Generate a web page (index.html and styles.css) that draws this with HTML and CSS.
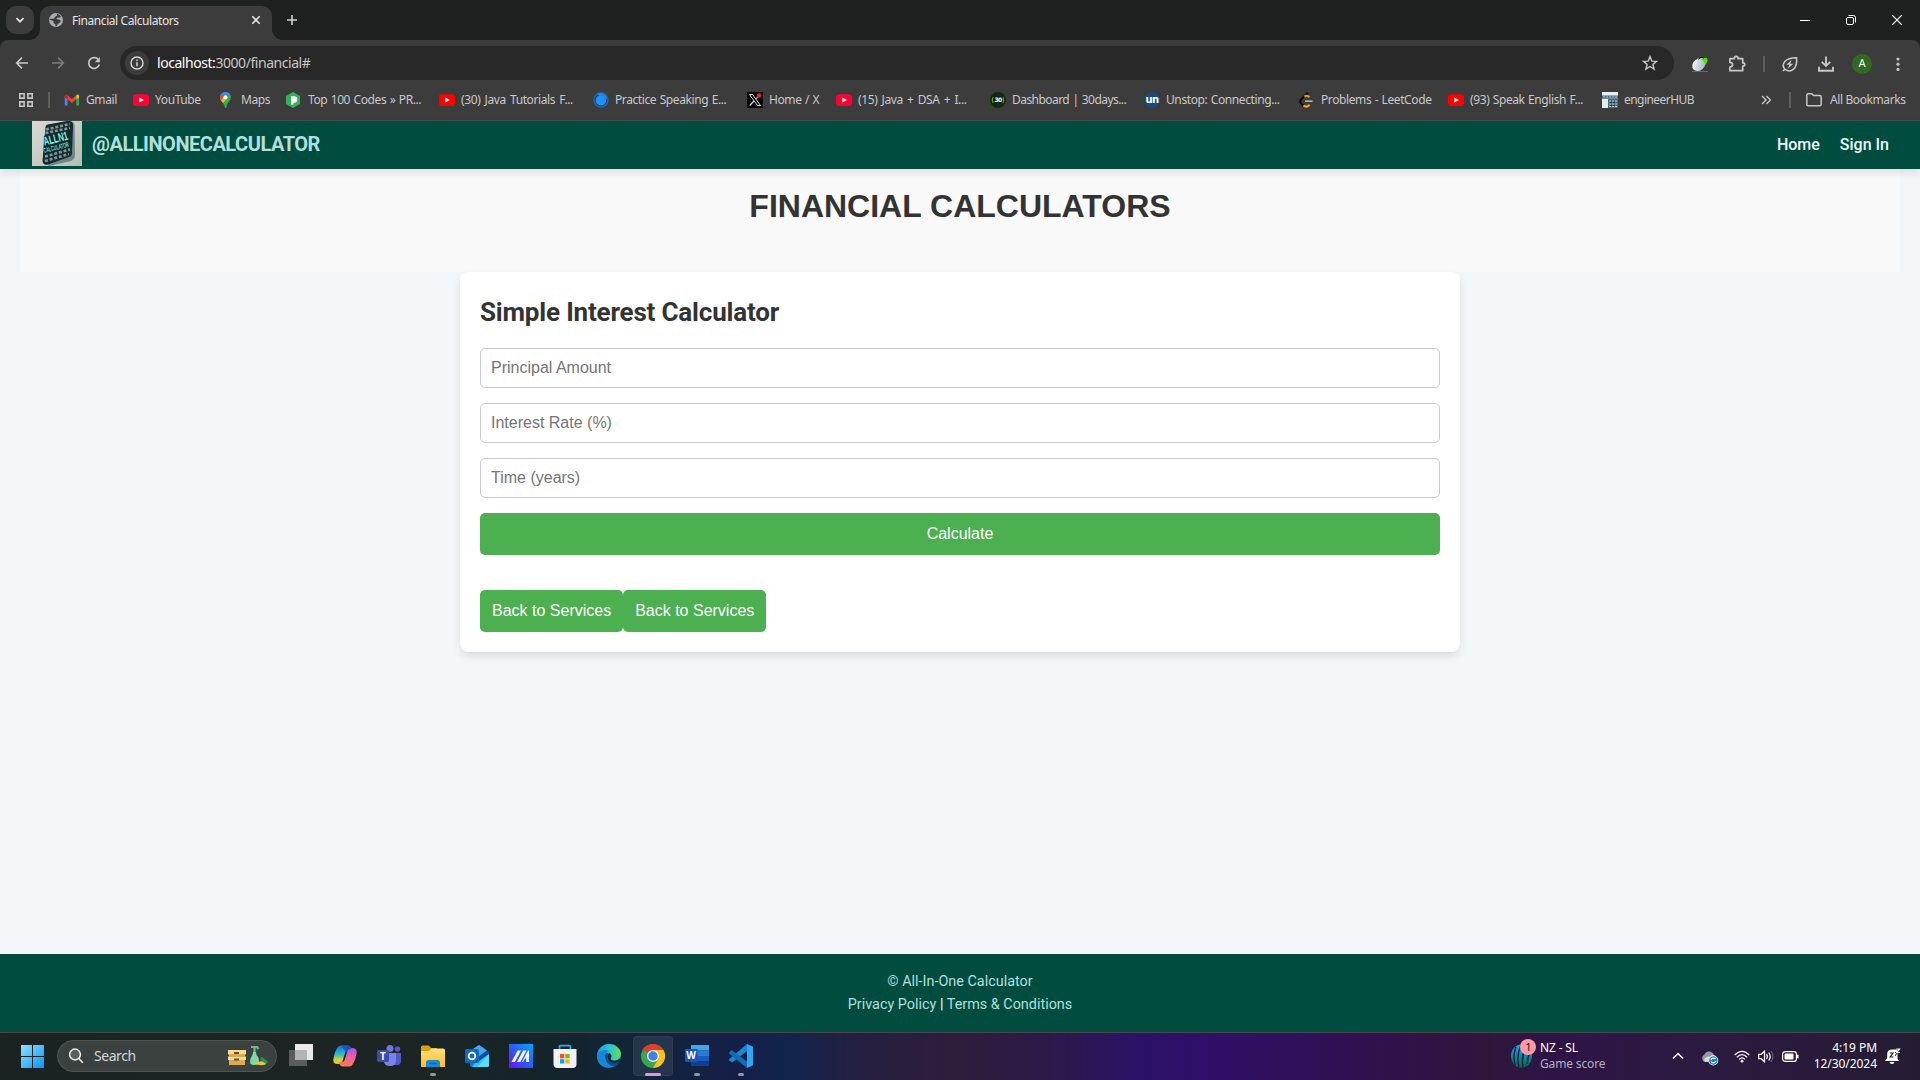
FILE: index.html
```html
<!DOCTYPE html>
<html lang="en">
<head>
<meta charset="utf-8">
<title>Financial Calculators</title>
<link rel="stylesheet" href="styles.css">
</head>
<body>
<svg class="defs" width="0" height="0">
  <defs>
    <symbol id="yt" viewBox="0 0 16 16"><rect y="2.3" width="16" height="11.6" rx="3" fill="currentColor"/><path d="M6.3 5.6l4.6 2.5-4.6 2.5z" fill="#fff"/></symbol>
    <linearGradient id="gWin" x1="0" y1="0" x2="1" y2="1"><stop offset="0" stop-color="#8be3ff"/><stop offset="1" stop-color="#0a93f5"/></linearGradient>
    <linearGradient id="gM" x1="0" y1="1" x2="1" y2="0"><stop offset="0" stop-color="#6a10f5"/><stop offset=".45" stop-color="#2f55f7"/><stop offset="1" stop-color="#00a8ff"/></linearGradient>
    <linearGradient id="gEdge" x1="0" y1="0" x2="1" y2="0"><stop offset="0" stop-color="#1f9de0"/><stop offset=".55" stop-color="#2fc3d0"/><stop offset="1" stop-color="#62e04f"/></linearGradient>
    <linearGradient id="gCopA" x1="0" y1="0" x2="0" y2="1"><stop offset="0" stop-color="#1475d8"/><stop offset=".45" stop-color="#28b5d8"/><stop offset=".75" stop-color="#c5d43a"/><stop offset="1" stop-color="#ffc21a"/></linearGradient>
    <linearGradient id="gCopB" x1="0" y1="0" x2="0" y2="1"><stop offset="0" stop-color="#a553e8"/><stop offset=".5" stop-color="#ee5fa5"/><stop offset="1" stop-color="#ff7a4a"/></linearGradient>
    <linearGradient id="gFold" x1="0" y1="0" x2="0" y2="1"><stop offset="0" stop-color="#ffe07a"/><stop offset="1" stop-color="#fbbd2b"/></linearGradient>
    <linearGradient id="gCric" x1="0" y1="0" x2="0" y2="1"><stop offset="0" stop-color="#18a9ea"/><stop offset=".55" stop-color="#0b8796"/><stop offset="1" stop-color="#086b3f"/></linearGradient>
    <linearGradient id="gLogo" x1="0" y1="0" x2="1" y2="1"><stop offset="0" stop-color="#d9dad3"/><stop offset="1" stop-color="#b4beb4"/></linearGradient>
    <linearGradient id="gMouse" x1="0" y1="0" x2="1" y2="1"><stop offset="0" stop-color="#fff"/><stop offset="1" stop-color="#9aabb5"/></linearGradient>
  </defs>
</svg>

<header class="chrome">
  <div class="tabstrip">
    <div class="tab-search"><svg width="10" height="10" viewBox="0 0 10 10"><path d="M1.5 3.2L5 6.7l3.500-3.500" fill="none" stroke="#e3e3e3" stroke-width="1.8"/></svg></div>
    <div class="tab">
      <svg width="16" height="16" viewBox="0 0 16 16"><circle cx="8" cy="8" r="7" fill="#a6acb4"/><path d="M8.400 1.600C10 3 9 4.200 7.600 4.600 6.200 5 7 6.400 5.600 6.800 4.600 7 3 6.500 1.500 7.500c.8.900 2.300.6 3.400 1.200 1.300.7.200 1.700 1 2.500.8.700 1.700.7 1.700 2.100v1.200c1.500-.4 1.600-2 2.500-2.700 1.200-1 2.500-1.200 2.500-2.700-.3-1.600-2-1.300-3-1.500-1.300-.2-1.200-1.700 0-2 1.200-.4 2.300.2 3.500-.6C12.300 3.300 10.500 2 8.400 1.600z" fill="#3c3c3c"/></svg>
      <span class="tab-title">Financial Calculators</span>
      <svg class="tab-close" width="10" height="10" viewBox="0 0 10 10"><path d="M1.300 1.300l7.400 7.400M8.700 1.300L1.300 8.700" stroke="#e3e3e3" stroke-width="1.600"/></svg>
    </div>
    <svg class="new-tab" width="12" height="12" viewBox="0 0 12 12"><path d="M6 1v10M1 6h10" stroke="#d0d0d0" stroke-width="1.600"/></svg>
    <div class="win-buttons">
      <svg viewBox="0 0 46 40"><path d="M18 20.500h10" stroke="#fff"/></svg>
      <svg viewBox="0 0 46 40"><g fill="none" stroke="#fff"><rect x="18.500" y="17.500" width="7" height="7" rx="1.500"/><path d="M20.500 15.500h5q2 0 2 2v5"/></g></svg>
      <svg viewBox="0 0 46 40"><path d="M18.200 15.200l9.600 9.600M27.800 15.200l-9.600 9.600" stroke="#fff" stroke-width="1.100"/></svg>
    </div>
  </div>

  <div class="toolbar">
    <svg class="tool" viewBox="0 0 36 34"><path d="M24 17H13.500M18 11.700L12.700 17l5.300 5.300" fill="none" stroke="#c7c7c7" stroke-width="1.700"/></svg>
    <svg class="tool" viewBox="0 0 36 34"><path d="M12 17h10.500M18 11.700l5.300 5.300-5.300 5.300" fill="none" stroke="#7d7d7d" stroke-width="1.700"/></svg>
    <svg class="tool" viewBox="0 0 36 34"><path d="M22.600 14A5.400 5.400 0 1 0 23.300 18.500" fill="none" stroke="#c7c7c7" stroke-width="1.700"/><path d="M23.900 11v5.200h-5.200z" fill="#c7c7c7"/></svg>
    <div class="omnibox">
      <div class="site-info"><svg width="14" height="14" viewBox="0 0 14 14"><circle cx="7" cy="7" r="6" fill="none" stroke="#d8d8d8" stroke-width="1.400"/><path d="M7 6.200v4M7 3.600v1.500" stroke="#d8d8d8" stroke-width="1.500"/></svg></div>
      <span class="url"><b>localhost:</b>3000/financial#</span>
      <svg class="star" width="16" height="16" viewBox="0 0 16 16"><path d="M8 1.600l1.800 4.500 4.700.3-3.600 3 1.200 4.700L8 11.500l-4.100 2.600 1.200-4.700-3.600-3 4.700-.3z" fill="none" stroke="#c7c7c7" stroke-width="1.400"/></svg>
    </div>
    <div class="toolbar-right">
      <svg class="tool" viewBox="0 0 36 34"><path d="M8 24.500h16" stroke="#62686b"/><ellipse cx="15" cy="17.500" rx="7.500" ry="5.700" transform="rotate(-43 15 17.500)" fill="url(#gMouse)"/><path d="M17.300 12.500c1.500-1.700 4.800-2.500 5.900-.9 1 1.700 0 4.500-1.900 6.300-.8-2.500-1.800-4-4-5.400z" fill="#4ee400"/><path d="M14.500 12.300c1.500-2 4-2.300 5-1.300" stroke="#111" fill="none"/></svg>
      <svg class="tool" viewBox="0 0 36 34"><path d="M9.900 11.700h4.400c0-3 3.800-3 3.800 0h4.600v4.200c2.800 0 2.800 3.200 0 3.200v4.600H9.900v-3.600c3.600-.4 3.600-4.300 0-4.700z" fill="none" stroke="#c7c7c7" stroke-width="1.700" stroke-linejoin="round"/></svg>
      <i class="divider"></i>
      <svg class="tool" viewBox="0 0 36 34"><path d="M13 22.400c-4.200-4.600-.5-11.700 11.500-11.600 1.300 10.500-5.500 16-11.500 11.600zm0 0l-2.200 1.400" fill="none" stroke="#c7c7c7" stroke-width="1.600"/><path d="M19.700 12.700l-5.400 5h3l-1.600 4.200 5.700-5.200h-3.200z" fill="#c7c7c7"/></svg>
      <svg class="tool" viewBox="0 0 36 34"><path d="M18 9.500v9.300M13.800 14.900L18 19l4.200-4.100M11 19.700v4.100h14v-4.100" fill="none" stroke="#c7c7c7" stroke-width="1.900"/></svg>
      <div class="tool avatar-cell"><span class="avatar">A</span></div>
      <svg class="tool" viewBox="0 0 36 34"><g fill="#c7c7c7"><circle cx="18" cy="12" r="1.600"/><circle cx="18" cy="17.200" r="1.600"/><circle cx="18" cy="22.400" r="1.600"/></g></svg>
    </div>
  </div>

  <div class="bookmarks">
    <svg class="apps" width="14" height="14" viewBox="0 0 14 14"><g fill="none" stroke="#c7c7c7" stroke-width="1.600"><path d="M.8.800h4.300v4.300H.8zM8.900.800h4.300v4.300H8.900zM.8 8.900h4.300v4.300H.8zM8.900 8.900h4.300v4.300H8.900z"/></g></svg>
    <i class="divider"></i>
    <nav class="bookmark-list">
      <a class="bm"><svg viewBox="0 0 16 16"><g transform="translate(.7 .3) scale(.9 1)"><path d="M0 4v9.300h3.200V7z" fill="#4285f4"/><path d="M16 4v9.300h-3.200V7z" fill="#34a853"/><path d="M0 4.200C0 2.300 2 1.800 3.200 2.900L8 6.600l4.800-3.700v4.200L8 10.800 3.200 7.100 0 4.900z" fill="#ea4335"/><path d="M12.800 2.900C14 1.800 16 2.300 16 4.200v.7l-3.200 2.300z" fill="#fbbc04"/><path d="M0 4.200C0 2.800 1 2.300 2 2.400l1.200.7v4L0 4.900z" fill="#c5221f"/></g></svg><span>Gmail</span></a>
      <a class="bm red2"><svg><use href="#yt"/></svg><span>YouTube</span></a>
      <a class="bm"><svg viewBox="0 0 16 16"><path d="M6.500 0C9.500 0 12 2.200 12 5.300c0 3.500-3.500 4.700-4.400 9.600-.3 1.400-1.600 1.400-1.900 0C5 11 1 9 1 5.300 1 2.300 3.500 0 6.500 0z" fill="#34a853"/><path d="M1 5.300C1 2.300 3.500 0 6.500 0c1.500 0 3 .5 4 1.700L4 9.500C2.500 8 1 7 1 5.300z" fill="#4285f4"/><path d="M2.200 2.200L5 4.700l-3 3.500C.8 6.500.6 4.300 2.200 2.200z" fill="#ea4335"/><path d="M2 8.200l3-3.500 3.200 1.800L4 11z" fill="#fbbc04"/><circle cx="6.500" cy="5.300" r="2" fill="#fff"/></svg><span>Maps</span></a>
      <a class="bm"><svg viewBox="0 0 16 16"><path d="M7 0l7 4v8l-7 4-7-4V4z" fill="#2fb457"/><path d="M5 4.200h3a3.300 3.300 0 0 1 0 6.600H7.500v1.600H5z" fill="#fff"/></svg><span>Top 100 Codes » PR...</span></a>
      <a class="bm red1 spaced"><svg><use href="#yt"/></svg><span>(30) Java Tutorials F...</span></a>
      <a class="bm"><svg viewBox="0 0 16 16"><circle cx="8" cy="8" r="7" fill="none" stroke="#1e6dbb" stroke-width="1.300"/><circle cx="8" cy="8.300" r="5.200" fill="#1e90ff"/><path d="M5 2.500c4-1.500 8 1 8.300 4.500" stroke="#1e90ff" stroke-width="1.500" fill="none"/></svg><span>Practice Speaking E...</span></a>
      <a class="bm"><svg viewBox="0 0 16 16"><path d="M0 0h16v16H0z" fill="#000"/><path d="M2.500 2.500h3l8 11h-3z" fill="#000" stroke="#ddd"/><path d="M12.800 2.500L8.800 7M7 9l-4.300 4.500" stroke="#ddd" stroke-width="1.100"/><circle cx="12" cy="3.500" r="2.200" fill="#f4212e"/></svg><span>Home / X</span></a>
      <a class="bm red2 spaced"><svg><use href="#yt"/></svg><span>(15) Java + DSA + I...</span></a>
      <a class="bm tight"><svg viewBox="0 0 16 16"><circle cx="8" cy="8" r="8" fill="#16270f"/><text x="8" y="10.300" text-anchor="middle" class="t30">30</text><path d="M3 5q-1.600 3 0 6M13 5q1.600 3 0 6" stroke="#55b82e" fill="none"/></svg><span>Dashboard | 30days...</span></a>
      <a class="bm"><svg viewBox="0 0 16 16"><circle cx="8" cy="8" r="7.800" fill="#1c4980"/><text x="8" y="11.300" text-anchor="middle" class="tun">un</text></svg><span>Unstop: Connecting...</span></a>
      <a class="bm"><svg viewBox="0 0 16 16"><path d="M8.800.700L2 7.600q-1.500 1.800 0 3.500l2.500 2.600" fill="none" stroke="#0a0a0a" stroke-width="2"/><path d="M5.500 4.600q2.500-2 4.800.5M4.500 13.600q3 2.500 6.200-.9" fill="none" stroke="#ffa116" stroke-width="2"/><path d="M6 9.200h7.500" stroke="#b3b3b3" stroke-width="1.600"/></svg><span>Problems - LeetCode</span></a>
      <a class="bm red1"><svg><use href="#yt"/></svg><span>(93) Speak English F...</span></a>
      <a class="bm tight"><svg viewBox="0 0 16 16"><path d="M0 0h16v16H0z" fill="#e5edf0"/><path d="M0 3.500h16v3.200H0zM6 7h10v9H6z" fill="#476b7c"/><path d="M1 5h14M7 9h8M7 12h8M7 14.500h8" stroke="#b7cbd4" stroke-dasharray="2 1"/><path d="M8 10.500h6M8 13.500h6" stroke="#1e3a49" stroke-dasharray="2 1"/></svg><span>engineerHUB</span></a>
    </nav>
    <svg class="more" width="10" height="10" viewBox="0 0 10 10"><path d="M1 1l4 4-4 4M5.500 1l4 4-4 4" fill="none" stroke="#c7c7c7" stroke-width="1.400"/></svg>
    <i class="divider"></i>
    <svg class="folder" width="16" height="14" viewBox="0 0 16 14"><path d="M.800 2.300q0-1.500 1.400-1.500h3.600l1.700 1.700h6.300q1.400 0 1.400 1.400v7.300q0 1.500-1.400 1.500H2.200q-1.400 0-1.400-1.500z" fill="none" stroke="#c7c7c7" stroke-width="1.500"/></svg>
    <span class="all">All Bookmarks</span>
  </div>
</header>

<main class="page">
  <nav class="navbar">
    <svg class="logo" width="50" height="45" viewBox="0 0 50 45">
      <path d="M0 0h50v45H0z" fill="url(#gLogo)"/>
      <path d="M15 6L37 0q5 0 5.500 4l.5 30q0 4-4 6l-22 5-5-5z" fill="#547176" opacity=".75"/>
      <path d="M13.500 6q0-2 2-2.600L35 0h3q3 1 3 4l-1 28q0 3-3 4l-21 7.500q-5 1.500-5.500-4z" fill="#172b30"/>
      <path d="M14 8.500L38 3M13.500 12L38 7M13 35.500l25-7M13 40l24-7" stroke="#809798" stroke-width="2.600" stroke-dasharray="3 1.800"/>
      <path d="M12 15l26-6.500v17L11.500 33.500z" fill="#112a2d"/>
      <text class="logo-a" transform="translate(12.500 24.500) rotate(-14)" textLength="25" lengthAdjust="spacingAndGlyphs">ALLN1</text>
      <text class="logo-b" transform="translate(12 32) rotate(-14)" textLength="26" lengthAdjust="spacingAndGlyphs">CALCULATOR</text>
    </svg>
    <span class="brand">@ALLINONECALCULATOR</span>
    <div class="nav-links"><a>Home</a><a>Sign In</a></div>
  </nav>
  <section class="hero"><h1>FINANCIAL CALCULATORS</h1></section>
  <section class="card">
    <h2>Simple Interest Calculator</h2>
    <input type="text" placeholder="Principal Amount">
    <input type="text" placeholder="Interest Rate (%)">
    <input type="text" placeholder="Time (years)">
    <button class="btn wide">Calculate</button>
    <div class="back-row"><button class="btn">Back to Services</button><button class="btn">Back to Services</button></div>
  </section>
  <footer class="footer">
    <p>© All-In-One Calculator</p>
    <p><a>Privacy Policy</a> <span>|</span> <a>Terms &amp; Conditions</a></p>
  </footer>
</main>

<div class="taskbar">
  <svg class="start" width="23" height="23" viewBox="0 0 23 23"><path d="M0 0h11v11H0zM12 0h11v11H12zM0 12h11v11H0zM12 12h11v11H12z" fill="url(#gWin)"/></svg>
  <div class="search">
    <svg width="16" height="16" viewBox="0 0 16 16"><circle cx="7" cy="6.500" r="5.400" fill="#59605f" stroke="#eee" stroke-width="1.500"/><path d="M10.800 10.500l4 4.200" stroke="#eee" stroke-width="1.600"/></svg>
    <span>Search</span>
    <svg class="search-art" width="40" height="20" viewBox="0 0 40 20"><path d="M0 4h18v4.500H0zM0 10.500h18V14H0z" fill="#f5dd8d"/><path d="M1 8h16v3H1zM1 14h16v5H1z" fill="#dcab4f"/><path d="M6 7h5M6 13.500h5" stroke="#5a5144" stroke-width="1.800"/><path d="M23 1h6l1.500 2M26.500 2v5" stroke="#63bd91" stroke-width="2.200" fill="none"/><path d="M25 6h3q0 3 2.300 5.500 1.200 2 .2 6.500-4.500 2-8 0-1-4 .5-6.500Q25 9 25 6z" fill="#7fd8a8"/><path d="M27 17q5-3 12-1l-1.500 2.500Q32 20 27 18z" fill="#e8c53b"/><path d="M33 12l6 5" stroke="#26964e" stroke-width="3"/></svg>
  </div>
  <div class="apps-row">
    <div class="app"><svg viewBox="0 0 24 24"><path d="M0 6h18v16H0z" fill="#5a5c5c"/><path d="M6 0h18v16H6z" fill="#e9e9e9"/><path d="M6 6h12v10H6z" fill="#b3b3b3"/></svg></div>
    <div class="app"><svg viewBox="0 0 24 24"><path d="M8 1.500h7q2 0 2.800 2l1 2.500H15q-2 0-2.600 2l-3 9.500Q8.700 20 6.500 20H4.500Q0 20 .300 15.500 1 9 4 4 5.500 1.500 8 1.500z" fill="url(#gCopA)"/><path d="M16 22.500H9.500q-2 0-2.800-2L6 18h3q2 0 2.600-2l3-9.500Q15.300 4 17.500 4h2q4.500 0 4.200 4.500Q23 15 20 20q-1.500 2.500-4 2.500z" fill="url(#gCopB)" /><path d="M8 1.500h7q2 0 2.800 2l.5 1.500q-3-.5-4 2.500l-.5 1Q10 5 8 1.500z" fill="#1757bd"/></svg></div>
    <div class="app"><svg viewBox="0 0 24 24"><circle cx="13" cy="4.500" r="3.500" fill="#6f78df"/><circle cx="20.500" cy="5" r="2.700" fill="#5059c9"/><path d="M17 9h7v8q0 4-4 4h-3z" fill="#5059c9"/><path d="M7 9h12v8q0 5-6 5t-6-5z" fill="#7b83eb"/><rect y="6" width="12" height="12" rx="1.500" fill="#4049ac"/><text x="6" y="15.500" text-anchor="middle" class="letter">T</text></svg></div>
    <div class="app dot"><svg viewBox="0 0 24 24"><path d="M0 3q0-1.500 1.500-1.500H8l2 2.500h6v5H0z" fill="#dd9e10"/><path d="M0 7h8l2.500-2.500H22q2 0 2 2V23H0z" fill="url(#gFold)"/><path d="M5 23v-4.500Q5 16 7.500 16h9q2.500 0 2.500 2.500V23z" fill="#168bd8"/><path d="M8 19.500h8" stroke="#0d64a8" stroke-width="1.500"/></svg></div>
    <div class="app"><svg viewBox="0 0 24 24"><path d="M5 7l9-6 10 7v13q0 2-2 2H7q-2 0-2-2z" fill="#1479d4"/><path d="M5 7l9-6 8 5.500-12 8z" fill="#48a6ed"/><path d="M24 8v13q0 2-2 2H7l6-8z" fill="#32c4f3"/><path d="M16 19l8-9v11q0 2-2 2h-9z" fill="#5ddcf8"/><path d="M14 13l8-6.500L24 8v2l-10 7z" fill="#0b4b9b"/><rect y="5" width="14" height="14" rx="1.500" fill="#0f6cbd"/><circle cx="7" cy="12" r="3.300" fill="none" stroke="#fff" stroke-width="1.800"/></svg></div>
    <div class="app"><svg viewBox="0 0 24 24"><path d="M0 0h24v24H0z" fill="url(#gM)"/><path d="M2.500 18h3.300L12 6.500H8.700zM8 18h3.300L17.500 6.500h-3.300zM13 18L19 6.500h1V18h-2.800v-5L16 15.200h-.5L14 18z" fill="#f2f7ff"/></svg></div>
    <div class="app"><svg viewBox="0 0 24 24"><path d="M6.500 6V2.700q0-1 1-1h9q1 0 1 1V6" fill="none" stroke="#2caee8" stroke-width="1.700"/><path d="M.500 5h23v15q0 4-4 4h-15q-4 0-4-4z" fill="#f2f2f2"/><path d="M7 10h4.300v4.300H7z" fill="#f25022"/><path d="M12.300 10h4.300v4.300h-4.300z" fill="#7fba00"/><path d="M7 15.200h4.300v4.300H7z" fill="#00a4ef"/><path d="M12.300 15.200h4.300v4.300h-4.300z" fill="#ffb900"/></svg></div>
    <div class="app"><svg viewBox="0 0 24 24"><circle cx="12" cy="12" r="12" fill="#0c59a4"/><path d="M0 11C1 4 6 0 12 0c7 0 12 5 12 10 0 4-3 6.500-6.500 6.500-3 0-4.500-1-3.500-2.500 1-1.700.2-5-3.500-5C5 9 2 13 0 11z" fill="url(#gEdge)"/><path d="M0 11c2-5 8-6.500 12-3.500C8 8 7 13 9 17c1.500 3 4.500 5 8 5.500C9 26-1 21 0 11z" fill="#1b86d9"/><path d="M12 8.500c-3 1.500-3 5-1.500 7.500 2 3.300 7 4.200 12 1.500-.5 1-1.500 2.400-2.500 3.200-5 1.800-10-.7-11-5.700-.5-3 .5-5.500 3-6.500z" fill="#114a8b"/><path d="M12.500 9c2 1 2.300 3.300 1.400 4.900-.8 1.500.8 2.800 3.900 2.800q3.200 0 5-2l1 1.800c-4.500 3.500-10 3-12.200-.5-1.600-2.500-1.100-5.500.9-7z" fill="#15252b"/></svg></div>
    <div class="app active"><svg viewBox="0 0 24 24"><circle cx="12" cy="12" r="12" fill="#34a853"/><path d="M12 12L1.600 6A12 12 0 0 1 22.400 6z" fill="#e33b2e"/><path d="M12 6h10.400A12 12 0 0 1 12 24l5.200-9z" fill="#fbc116"/><path d="M12 12L1.600 6l5.200 9z" fill="#34a853"/><circle cx="12" cy="12" r="6" fill="#fff"/><circle cx="12" cy="12" r="4.700" fill="#3b82f0"/></svg></div>
    <div class="app dot"><svg viewBox="0 0 24 24"><path d="M6 1h18v5.500H6z" fill="#41a5ee"/><path d="M6 6.500h18V12H6z" fill="#2b7cd3"/><path d="M6 12h18v5.500H6z" fill="#185abd"/><path d="M6 17.500h18V22H6z" fill="#103f91"/><rect y="5" width="12.500" height="13" rx="1" fill="#1657b7"/><text x="6.200" y="15.300" text-anchor="middle" class="letter">W</text></svg></div>
    <div class="app dot"><svg viewBox="0 0 24 24"><path d="M18 0v7L3 18.500 0 16.300v-1z" fill="#1787cf"/><path d="M0 8.500L2.500 6 18 17.500V24L0 9.500z" fill="#0f6fb5"/><path d="M18 0l6 2.700v18.600L18 24z" fill="#2aa7f5"/></svg></div>
  </div>
  <div class="widget">
    <svg width="26" height="30" viewBox="0 0 26 30"><ellipse cx="11.500" cy="17" rx="10.500" ry="11.500" fill="url(#gCric)"/><path d="M6 8q-4 10-.5 18M11 6q-5 11-2 22M16 8q-5 9-3 20M20 13q-3 7-2.500 12" stroke="#2c1741" stroke-width="1.400" fill="none"/><circle cx="18" cy="8" r="8" fill="#ff99a4"/><text x="18.500" y="12" text-anchor="middle" class="badge">1</text></svg>
    <div class="widget-text"><b>NZ - SL</b><span>Game score</span></div>
  </div>
  <div class="tray">
    <svg class="chev" width="12" height="8" viewBox="0 0 12 8"><path d="M1 6.500l5-5 5 5" fill="none" stroke="#fff" stroke-width="1.500"/></svg>
    <svg class="cloud" width="18" height="16" viewBox="0 0 18 16"><path d="M4 12a4 4 0 0 1-.5-7.500Q5 1 8.500 1.500q4 .5 4.500 4.500l-6 6z" fill="#9b98a3"/><path d="M4 12q-2-3 1.500-5 4 0 6-2 4 0 4 5z" fill="#d9d7dc"/><circle cx="12.300" cy="10.500" r="4.900" fill="#fff"/><circle cx="12.300" cy="10.500" r="4.200" fill="#1878cf"/><path d="M9.900 10a2.500 2.500 0 0 1 4.500-.8m.3 1.700a2.500 2.500 0 0 1-4.500.8" fill="none" stroke="#fff" stroke-width="1.200"/></svg>
    <svg class="wifi" width="16" height="13" viewBox="0 0 16 13"><g fill="none" stroke="#fff" stroke-width="1.300"><path d="M.700 5q7.300-7.300 14.600 0M2.900 7.200q5.100-5.100 10.200 0M5.100 9.400q2.900-2.900 5.800 0"/></g><circle cx="8" cy="11.200" r="1.400" fill="#fff"/></svg>
    <svg class="vol" width="16" height="13" viewBox="0 0 16 13"><path d="M.700 4.300h2.500L6.500 1.200v10.600L3.200 8.700H.700z" fill="none" stroke="#fff" stroke-width="1.200"/><path d="M8.500 4.200q1.700 2.300 0 4.600M10.700 2.500q3 4 0 8" fill="none" stroke="#fff" stroke-width="1.200"/><path d="M13 1q4 5.500 0 11" fill="none" stroke="#77707f"/></svg>
    <svg class="batt" width="17" height="11" viewBox="0 0 17 11"><rect x=".600" y=".600" width="13.800" height="9.800" rx="2.500" fill="none" stroke="#fff" stroke-width="1.200"/><rect x="2.500" y="2.500" width="9" height="6" rx="1" fill="#fff"/><path d="M15.800 3.800v3.400" stroke="#fff" stroke-width="1.500"/></svg>
    <div class="clock"><span>4:19 PM</span><span>12/30/2024</span></div>
    <svg class="bell" width="16" height="17" viewBox="0 0 16 17"><path d="M2.200 6q0-4.500 4.800-4.500h5.500V11l1.500 2H0l2.200-3z" fill="#fff"/><path d="M4.500 14h5q-.5 2-2.500 2t-2.500-2z" fill="#fff"/><path d="M5 5h3L5.200 9H8.500" stroke="#241a33" stroke-width="1.200" fill="none"/><path d="M10 4.500h2.500L10 8" stroke="#241a33" fill="none"/><path d="M11.500 1h3l-2.700 3.500H15" stroke="#fff" stroke-width="1.200" fill="none"/></svg>
  </div>
</div>
</body>
</html>
```
FILE: styles.css
```css
* { box-sizing: border-box; }
html, body { height: 100%; }
body {
  margin: 0;
  width: 1920px;
  height: 1080px;
  overflow: hidden;
  display: flex;
  flex-direction: column;
  font-family: "Roboto", sans-serif;
  background: #f3f7fa;
}
svg { display: block; flex: none; }
.defs { position: absolute; }

/* Browser frame */
.chrome {
  height: 121px;
  flex: none;
  background: #1f2120;
  color: #c9c9c9;
  font-family: "Noto Sans", sans-serif;
  font-size: 12px;
}
.tabstrip { height: 40px; display: flex; padding: 6px 0 0 6px; }
.tab-search {
  width: 28px; height: 28px; border-radius: 10px; background: #3c3c3c;
  display: flex; align-items: center; justify-content: center;
}
.tab {
  position: relative;
  width: 232px; height: 34px; margin-left: 6px; padding: 0 11px 6px 8px;
  display: flex; align-items: center;
  background: #3c3c3c; border-radius: 10px 10px 0 0;
}
.tab::before, .tab::after {
  content: ""; position: absolute; bottom: 0; width: 10px; height: 10px;
}
.tab::before { left: -10px; background: radial-gradient(circle at 0 0, transparent 9.500px, #3c3c3c 10px); }
.tab::after { right: -10px; background: radial-gradient(circle at 100% 0, transparent 9.500px, #3c3c3c 10px); }
.tab-title { margin: 1px auto 0 8px; color: #e3e3e3; letter-spacing: -.42px; white-space: nowrap; }
.new-tab { margin: 8px 0 0 14px; }
.win-buttons { display: flex; margin: -6px 0 0 auto; }
.win-buttons svg { width: 46px; height: 40px; }

.toolbar {
  height: 41px; padding: 6px 4px 0; display: flex;
  background: #3c3c3c; border-radius: 8px 8px 0 0;
}
.tool { width: 36px; height: 34px; flex: none; }
.omnibox {
  width: 1554px; height: 34px; margin-left: 8px; padding: 0 16px 0 5px;
  display: flex; align-items: center; background: #282828; border-radius: 17px;
}
.site-info {
  width: 24px; height: 24px; border-radius: 50%; background: #3c3c3c;
  display: flex; align-items: center; justify-content: center;
}
.url { margin: -1px auto 0 8px; font-size: 14px; letter-spacing: -.45px; color: #c7c7c7; }
.url b { font-weight: 400; color: #fff; }
.toolbar-right { display: flex; align-items: center; margin-left: auto; }
.divider { display: block; width: 2px; height: 16px; flex: none; background: #5e5e5e; }
.toolbar-right .divider { margin: 0 7px; }
.avatar-cell { display: flex; align-items: center; justify-content: center; }
.avatar {
  width: 20px; height: 20px; border-radius: 50%; background: #33691e; color: #fff;
  font: 11px/20px "Roboto", sans-serif; text-align: center;
}

.bookmarks {
  height: 40px; padding: 0 15px 2px 19px; display: flex; align-items: center;
  background: #3c3c3c; border-bottom: 1px solid #4a4a4a; white-space: nowrap;
}
.bookmarks > .divider { margin-left: 15px; }
.bookmark-list {
  margin-left: 14px; display: grid;
  grid-template-columns: 69px 86px 67px 153px 154px 154px 89px 154px 154px 155px 149px 154px 100px;
}
.bm { display: flex; align-items: center; gap: 6px; letter-spacing: -.4px; word-spacing: .7px; color: var(--c); }
.bm span { color: #c9c9c9; }
.bm svg { width: 16px; height: 16px; }
.spaced { word-spacing: 1.500px; }
.tight { letter-spacing: -.550px; }
.red1 { --c: #f00; }
.red2 { --c: #ff0033; }
.more { margin-left: auto; }
.more + .divider { margin-left: 18px; }
.folder { margin-left: 15px; }
.all { margin-left: 8px; width: 75px; letter-spacing: -.4px; }
.t30 { font: bold 6px "DejaVu Sans", sans-serif; fill: #fff; }
.tun { font: bold 10px "DejaVu Sans", sans-serif; fill: #fff; letter-spacing: -.5px; }

/* Site */
.page { flex: 1; display: flex; flex-direction: column; background: #f3f7fa; }
.navbar {
  position: relative; height: 48px; flex: none; padding: 0 32px;
  display: flex; align-items: center;
  background: #004d40; box-shadow: 0 4px 8px rgba(0, 0, 0, .1);
}
.logo { align-self: flex-start; }
.logo-a { font: bold 12px "Liberation Sans", sans-serif; fill: #7cf2e3; }
.logo-b { font: bold 7px "Liberation Sans", sans-serif; fill: #6fdccf; }
.brand { margin: -2px 0 0 10px; font-size: 20px; letter-spacing: -.480px; font-weight: 700; color: #b2dfdb; }
.nav-links { margin: -2px -1px 0 auto; display: flex; gap: 20px; font-size: 16px; font-weight: 500; color: #edf7f6; }
.hero { height: 103px; flex: none; margin: 0 20px; background: #f9f9f9; }
.hero h1 {
  margin: 0; padding-top: 19px; text-align: center; color: #333;
  font: bold 32px/37px "Liberation Sans", sans-serif;
}
.card {
  width: 1000px; height: 380px; flex: none; margin: 0 auto; padding: 20px;
  background: #fff; border-radius: 8px; box-shadow: 0 4px 8px rgba(0, 0, 0, .1);
}
.card h2 { margin: 0 0 16px; font-size: 26px; letter-spacing: -.180px; line-height: 40px; font-weight: 700; color: #333; }
.card input {
  display: block; width: 100%; height: 40px; margin-bottom: 15px; padding: 10px;
  border: 1px solid #ccc; border-radius: 5px; background: #fff;
  font: 16px "Liberation Sans", sans-serif;
}
.card input::placeholder { color: #757575; }
.btn {
  height: 42px; padding: 0 12px; border: 0; border-radius: 5px;
  background: #4caf50; color: #fff; font: 16px "Liberation Sans", sans-serif;
}
.wide { display: block; width: 100%; }
.back-row { display: flex; margin-top: 35px; }
.footer {
  height: 78px; margin-top: auto; padding-top: 16px; background: #004d40;
  text-align: center; font-size: 14.400px; line-height: 23px; color: #b2dfdb;
}
.footer p { margin: 0; }
.footer span { color: #fff; }

/* Taskbar */
.taskbar {
  height: 48px; flex: none; padding: 0 0 1px 21px; display: flex; align-items: center;
  border-top: 1px solid #494750;
  font-family: "Noto Sans", sans-serif; color: #fff;
  background: linear-gradient(90deg, #1b2322 0, #1d2524 400px, #152429 530px, #11243b 650px, #151f49 740px, #10244c 790px, #242041 850px, #2f1d3b 960px, #2b1a4b 1060px, #2a1265 1130px, #2f0f68 1200px, #301052 1340px, #30153b 1490px, #2e1446 1550px, #2b1a40 1700px, #251c33 1920px);
}
.search {
  width: 220px; height: 32px; margin: 0 0 0 13px; padding: 0 8px 0 10px;
  display: flex; align-items: center; border-radius: 16px;
  background: #3a413f; border: 1px solid #505654; font-size: 14px; color: #d4d7d6;
}
.search span { margin: -1px 0 0 10px; letter-spacing: -.450px; }
.search-art { margin-left: auto; }
.apps-row { display: flex; margin-left: 4px; }
.app {
  position: relative; width: 40px; height: 40px; margin-right: 4px; border-radius: 4px;
  display: flex; align-items: center; justify-content: center;
}
.app svg { width: 24px; height: 24px; }
.app.active { background: rgba(255, 255, 255, .08); box-shadow: inset 0 0 0 1px rgba(255, 255, 255, .05); }
.dot::after, .active::after {
  content: ""; position: absolute; left: 50%; bottom: 0; height: 3px; border-radius: 2px; transform: translateX(-50%);
}
.dot::after { width: 6px; background: #92999c; }
.active::after { width: 16px; background: #dc9be0; }
.letter { font: bold 10px "Open Sans", sans-serif; fill: #fff; }
.widget { display: flex; align-items: center; margin-left: auto; width: 162px; gap: 4px; font-size: 12px; line-height: 16px; }
.widget svg { margin-top: -5px; }
.widget-text { display: flex; flex-direction: column; letter-spacing: -.150px; }
.widget b { font-weight: 400; }
.widget-text span { color: #b6adc0; }
.badge { font: 11px "Noto Sans", sans-serif; fill: #21131d; }
.tray { display: flex; align-items: center; width: 248px; font-size: 12px; line-height: 16px; }
.chev { margin-left: 0; }
.cloud { margin-left: 17px; margin-top: 3px; }
.wifi { margin-left: 15px; }
.vol { margin-left: 8px; }
.batt { margin-left: 8px; }
.clock { width: 78px; display: flex; flex-direction: column; text-align: right; letter-spacing: -.050px; }
.bell { margin-left: 8px; }
```
